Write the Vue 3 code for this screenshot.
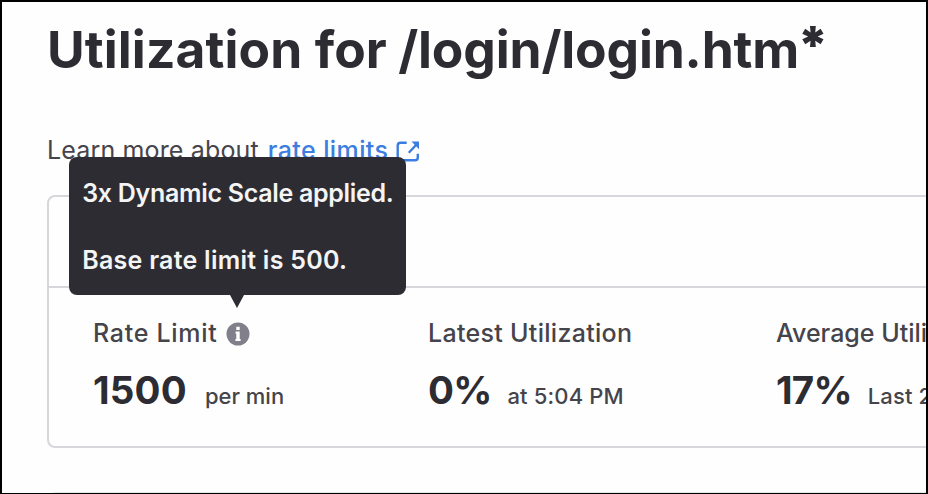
<script setup>
const stats = [
  { label: 'Rate Limit', value: '1500', note: 'per min', info: true, key: 'rate' },
  { label: 'Latest Utilization', value: '0%', note: 'at 5:04 PM', key: 'latest' },
  { label: 'Average Utilization', value: '17%', note: 'Last 24 hours', key: 'average' },
]
</script>

<template>
  <main class="page">
    <h1 class="title">Utilization for <span class="path">/login/login.htm<b>*</b></span></h1>
    <p class="learn">
      <span>Learn more about</span>
      <a class="link"><span>rate limits</span>
        <svg class="external" viewBox="0 0 24 22"><path d="M10.7 1.7H4.5Q1.7 1.7 1.7 4.5V16.5Q1.7 19.3 4.5 19.3H19Q21.8 19.3 21.8 16.5V12.8" /><path d="M12.8 11.7L20 4" /><path class="head" d="M15.5 .6H23V8.3Z" /></svg>
      </a>
    </p>
    <section class="card">
      <div class="card-head"></div>
      <div class="stats">
        <div v-for="s in stats" :key="s.key" class="stat" :class="s.key">
          <div class="label">
            <span>{{ s.label }}</span>
            <span v-if="s.info" class="info">
              <svg viewBox="0 0 24 24"><circle cx="12" cy="12" r="11.5" /><path d="M10.3 4.8h3.4v3.2h-3.4zM9.6 9.6h4.1v7.4h.9v2.1H9.4V17h.9v-5.3h-.7z" /></svg>
              <span class="tooltip" role="tooltip"><span class="scale">3x Dynamic Scale applied.</span><span class="base">Base rate limit is 500.</span></span>
            </span>
          </div>
          <div class="reading"><strong>{{ s.value }}</strong><span class="note">{{ s.note }}</span></div>
        </div>
      </div>
    </section>
    <section class="next-card"></section>
  </main>
</template>

<style>
body { background: #fff; }
</style>
<style scoped>
* { box-sizing: border-box; }
.page { width: 928px; height: 494px; overflow: hidden; border: 2px solid #000; border-bottom-width: 1px; padding: 17px 0 0 45px; background: #fefefe; color: #2d2c33; font-family: Inter, "Liberation Sans", sans-serif; }
.title { margin: 0; font-size: 51.5px; line-height: 60px; font-weight: 650; letter-spacing: 0.1px; white-space: nowrap; }
.path { margin-left: -1px; letter-spacing: -0.15px; }
.title b { margin-left: -2px; font-weight: 900; line-height: 0; vertical-align: 5px; }
.learn { margin: 54px 0 0; height: 34px; display: flex; gap: 9px; font-size: 25px; line-height: 34px; white-space: nowrap; color: #45444b; letter-spacing: 0.15px; }
.link { display: flex; gap: 8px; color: #3b7de0; font-weight: 500; letter-spacing: 0.4px; }
.external { width: 24px; height: 22px; margin-top: 8px; fill: none; stroke: currentColor; stroke-width: 2.4; }
.external .head { fill: currentColor; stroke: none; }
.card { margin-top: 28px; width: 1120px; height: 253px; border: 2px solid #d7d7db; border-radius: 8px; }
.card-head { height: 91px; border-bottom: 2px solid #d7d7db; }
.next-card { margin-top: 44px; width: 1120px; height: 60px; border: 1px solid #e6e6e9; border-radius: 8px; }
.stats { display: grid; grid-template-columns: 335px 348px 348px; padding: 28px 0 0 44px; }
.label { display: flex; gap: 8.4px; height: 34px; font-size: 25px; line-height: 34px; color: #45444b; font-weight: 450; letter-spacing: 0.3px; white-space: nowrap; }
.rate .label { letter-spacing: 0.7px; }
.average .label { letter-spacing: 0; }
.info { position: relative; width: 24px; height: 24px; margin-top: 6px; }
.info svg { display: block; width: 24px; height: 24px; fill: #81808a; }
.info path { fill: #fff; }
.reading { display: flex; align-items: baseline; height: 48px; margin-top: 16px; line-height: 48px; white-space: nowrap; }
.reading strong { font-size: 38.5px; font-weight: 700; letter-spacing: -0.8px; }
.rate strong { letter-spacing: 0.2px; }
.note { margin-left: 16px; font-size: 22px; color: #45444b; font-weight: 450; letter-spacing: 0.15px; }
.rate .note { margin-left: 18px; letter-spacing: 0; }
.tooltip { position: absolute; left: -157px; bottom: 51px; width: 337px; height: 138px; padding: 19px 13.5px; display: flex; flex-direction: column; gap: 33px; border-radius: 8px; background: #2d2c33; color: #f4f4f4; font-weight: 600; }
.scale { letter-spacing: -0.3px; }
.base { letter-spacing: 0.25px; }
.tooltip::after { content: ""; position: absolute; top: 100%; left: 161px; border: solid transparent; border-width: 13px 7.5px 0; border-top-color: #2d2c33; }
</style>
